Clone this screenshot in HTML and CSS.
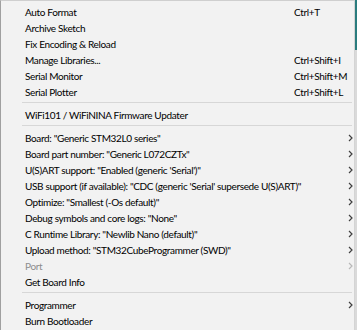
FILE: index.html
```html
<!DOCTYPE html>
<html>
<head>
<meta charset="utf-8">
<link rel="stylesheet" href="styles.css">
</head>
<body>
<div class="screen">
  <div class="menu">
    <div class="row"><span class="label">Auto Format</span><span class="sc">Ctrl+T</span></div>
    <div class="row"><span class="label">Archive Sketch</span></div>
    <div class="row"><span class="label">Fix Encoding &amp; Reload</span></div>
    <div class="row"><span class="label">Manage Libraries...</span><span class="sc">Ctrl+Shift+I</span></div>
    <div class="row"><span class="label">Serial Monitor</span><span class="sc">Ctrl+Shift+M</span></div>
    <div class="row"><span class="label">Serial Plotter</span><span class="sc">Ctrl+Shift+L</span></div>
    <div class="sep"></div>
    <div class="row"><span class="label">WiFi101 / WiFiNINA Firmware Updater</span></div>
    <div class="sep"></div>
    <div class="row"><span class="label">Board: "Generic STM32L0 series"</span><svg class="arr" viewBox="0 0 5 8"><path d="M1 1 L4 4 L1 7" /></svg></div>
    <div class="row"><span class="label">Board part number: "Generic L072CZTx"</span><svg class="arr" viewBox="0 0 5 8"><path d="M1 1 L4 4 L1 7" /></svg></div>
    <div class="row"><span class="label">U(S)ART support: "Enabled (generic 'Serial')"</span><svg class="arr" viewBox="0 0 5 8"><path d="M1 1 L4 4 L1 7" /></svg></div>
    <div class="row"><span class="label">USB support (if available): "CDC (generic 'Serial' supersede U(S)ART)"</span><svg class="arr" viewBox="0 0 5 8"><path d="M1 1 L4 4 L1 7" /></svg></div>
    <div class="row"><span class="label">Optimize: "Smallest (-Os default)"</span><svg class="arr" viewBox="0 0 5 8"><path d="M1 1 L4 4 L1 7" /></svg></div>
    <div class="row"><span class="label">Debug symbols and core logs: "None"</span><svg class="arr" viewBox="0 0 5 8"><path d="M1 1 L4 4 L1 7" /></svg></div>
    <div class="row"><span class="label">C Runtime Library: "Newlib Nano (default)"</span><svg class="arr" viewBox="0 0 5 8"><path d="M1 1 L4 4 L1 7" /></svg></div>
    <div class="row"><span class="label">Upload method: "STM32CubeProgrammer (SWD)"</span><svg class="arr" viewBox="0 0 5 8"><path d="M1 1 L4 4 L1 7" /></svg></div>
    <div class="row disabled"><span class="label">Port</span><svg class="arr" viewBox="0 0 5 8"><path d="M1 1 L4 4 L1 7" /></svg></div>
    <div class="row"><span class="label">Get Board Info</span></div>
    <div class="sep"></div>
    <div class="row"><span class="label">Programmer</span><svg class="arr" viewBox="0 0 5 8"><path d="M1 1 L4 4 L1 7" /></svg></div>
    <div class="row"><span class="label">Burn Bootloader</span></div>
  </div>
  <div class="edge"></div>
</div>
</body>
</html>
```

FILE: styles.css
```css
html, body {
  margin: 0;
  padding: 0;
  background: #f0f0f0;
}

.screen {
  display: flex;
  width: 357px;
  height: 330px;
  overflow: hidden;
}

.menu {
  width: 353px;
  border-left: 1px solid #a0a0a0;
  border-right: 1px solid #d4d4d4;
  border-top: 1px solid #cfcfcf;
  background: #f2f2f2;
  padding-top: 3px;
  font-family: Lato, "Open Sans", sans-serif;
  font-size: 10px;
  letter-spacing: -0.35px;
  color: #000;
  flex: none;
}

.edge {
  width: 2px;
  flex: none;
  background: linear-gradient(#2a7c7e 0, #2a7c7e 50px, #dadada 50px, #dadada 100%);
}

.row {
  height: 16px;
  display: grid;
  grid-template-columns: 269px 1fr 10px;
  align-items: center;
  padding-left: 24px;
  white-space: nowrap;
}

.label {
  grid-column: 1;
  line-height: 16px;
}

.sc {
  grid-column: 2;
  line-height: 16px;
}

.arr {
  grid-column: 3;
  width: 5px;
  height: 8px;
  margin-left: 4px;
}

.arr path {
  fill: none;
  stroke: #404040;
  stroke-width: 1.2;
}

.disabled {
  color: #8d8d8d;
}

.disabled .arr path {
  stroke: #b8b8b8;
}

.sep {
  height: 1px;
  margin: 2px 2px 4px 21px;
  background: #d7d7d7;
}
```
